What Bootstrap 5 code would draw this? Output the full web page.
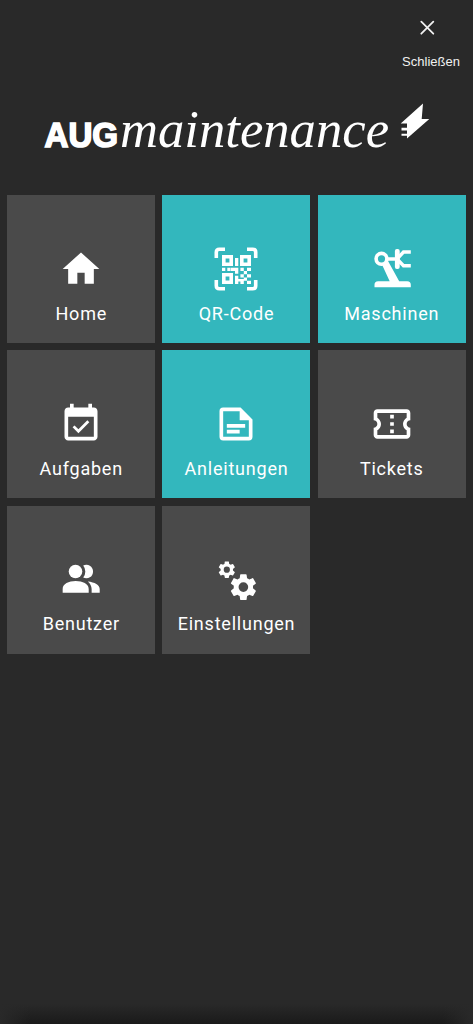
<!DOCTYPE html>
<html lang="de">
<head>
<meta charset="utf-8">
<meta name="viewport" content="width=device-width, initial-scale=1">
<title>AUGmaintenance</title>
<link href="https://cdn.jsdelivr.net/npm/bootstrap@5.3.0/dist/css/bootstrap.min.css" rel="stylesheet">
<style>
body{background:#292929;color:#fff;font-family:Roboto,"Liberation Sans",sans-serif}
.page{height:1024px}
.page-shade{height:20px;margin-top:auto;background:linear-gradient(90deg,#292929,#29292900 30px calc(100% - 30px),#292929),linear-gradient(#292929,#1a1a1a)}
.closer{width:84px;height:84px;padding-top:15px;color:#f1f1f1;font:13px/18px "Liberation Sans",sans-serif}
.closer svg{width:24px;height:24px;margin-right:8px}
.closer span{margin-top:14px}
.brand{height:111px}
.tiles{display:grid;grid-template-columns:repeat(3,148px);grid-auto-rows:148px;gap:7.25px;padding-left:7px}
.tile{background:#4a4a4a;color:#fff;padding-top:52px;font-size:18px;line-height:24px;letter-spacing:.78px}
.tile.on{background:#33b7bd}
.tile svg{width:44px;height:44px;fill:currentColor}
.tile span{margin-top:10.6px;padding-left:.5px;white-space:nowrap}
</style>
</head>
<body>
<main class="page d-flex flex-column overflow-hidden">
<a href="#" class="closer ms-auto d-flex flex-column align-items-center text-decoration-none">
<svg viewBox="0 0 24 24" stroke="currentColor" stroke-width="1.8" stroke-linecap="round"><path d="M6.3 6.7l12 12M18.3 6.7l-12 12"/></svg>
<span>Schließen</span></a>
<svg class="brand w-100 flex-shrink-0" viewBox="0 84 473 111" fill="#fff">
<text x="44.5" y="147" font-family="Liberation Sans,sans-serif" font-weight="700" font-size="34.5" textLength="73.5" lengthAdjust="spacingAndGlyphs" stroke="#fff" stroke-width="1.7">AUG</text>
<text x="120" y="147" font-family="Liberation Serif,serif" font-style="italic" font-size="53" textLength="269" lengthAdjust="spacingAndGlyphs">maintenance</text>
<path d="M423 103.5L421.700 119H429.300L407 138.500V135.700H401.500V133.700H407V130.500H401.500V127.700H407V123.500H400.700Z"/>
</svg>
<nav class="tiles">
<a href="#" class="tile d-flex flex-column align-items-center text-decoration-none"><svg viewBox="0 0 24 24"><path d="M10 20v-6h4v6h5v-8h3L12 3 2 12h3v8z"/></svg><span>Home</span></a>
<a href="#" class="tile on d-flex flex-column align-items-center text-decoration-none"><svg viewBox="0 0 44 44"><path fill="none" stroke="currentColor" stroke-width="3.6" d="M2.3 11V5.3q0-3 3-3H11M33 2.3h5.7q3 0 3 3V11M2.3 33v5.7q0 3 3 3H11M33 41.7h5.7q3 0 3-3V33"/><path fill-rule="evenodd" d="M8 8h11v11H8zm3.6 3.6v3.8h3.8v-3.8zM26 8h11v11H26zm3.6 3.6v3.8h3.8v-3.8zM8 26h11v11H8zm3.6 3.6v3.8h3.8v-3.8zM21 11h3.3v8H21zM8 20.7h3.3V24H8zM13.3 20.7h3.3V24h-3.3zM17 20.7h7.3v6H21V24h-4zM26.4 20.7h3.4V24h-3.4zM33 20.7h4V24h-4zM29.8 24H33v3.3h-3.2zM33 27.3h4v3.2h-4zM26.4 27.3h3.4v3.2h-3.4zM21 28.8h3.3v3.2h5.5v-1.5H33v3.3h-3.2V37h-3.4v-2.5h-2.1V37H21zM33 33.8h4V37h-4z"/></svg><span>QR-Code</span></a>
<a href="#" class="tile on d-flex flex-column align-items-center text-decoration-none"><svg viewBox="0 0 44 44"><path d="M4.500 40.200v-2.400q0-3.600 3.600-3.600h11.600L12.300 18.200l6-3.600L29.200 34.200h8q3.600 0 3.600 3.600v2.400z"/><circle cx="11.500" cy="11.800" r="5.400" fill="none" stroke="currentColor" stroke-width="3.600"/><path fill="none" stroke="currentColor" stroke-width="3.400" d="M17.500 12h8M40.800 5H33.500l-6.500 7 6.500 6.700h7.300"/><rect x="24.900" y="2" width="4.800" height="20" rx="2"/></svg><span>Maschinen</span></a>
<a href="#" class="tile d-flex flex-column align-items-center text-decoration-none"><svg viewBox="0 0 24 24"><path d="M16.530 11.060L15.470 10l-4.880 4.880-2.120-2.120-1.060 1.060L10.590 17zM19 3h-1V1h-2v2H8V1H6v2H5c-1.110 0-1.990.9-1.990 2L3 19c0 1.100.89 2 2 2h14c1.100 0 2-.9 2-2V5c0-1.100-.9-2-2-2zm0 16H5V8h14z"/></svg><span>Aufgaben</span></a>
<a href="#" class="tile on d-flex flex-column align-items-center text-decoration-none"><svg viewBox="0 0 24 24"><path fill-rule="evenodd" d="M5 3h9.500L21 9.500V19a2 2 0 0 1-2 2H5a2 2 0 0 1-2-2V5a2 2 0 0 1 2-2zm0 2v14h14v-9h-5V5zM7 12h10v2H7zm0 3.200h7v2H7z"/></svg><span>Anleitungen</span></a>
<a href="#" class="tile d-flex flex-column align-items-center text-decoration-none"><svg viewBox="0 0 24 24"><path d="M22 10V6c0-1.110-.9-2-2-2H4c-1.100 0-1.990.89-1.990 2v4c1.100 0 1.990.9 1.990 2s-.89 2-2 2v4c0 1.100.9 2 2 2h16c1.100 0 2-.9 2-2v-4c-1.100 0-2-.9-2-2s.9-2 2-2zm-2-1.460c-1.190.69-2 1.990-2 3.460s.81 2.770 2 3.460V18H4v-2.540c1.190-.69 2-1.990 2-3.460 0-1.480-.8-2.770-1.990-3.460L4 6h16zM11 15h2v2h-2zm0-4h2v2h-2zm0-4h2v2h-2z"/></svg><span>Tickets</span></a>
<a href="#" class="tile d-flex flex-column align-items-center text-decoration-none"><svg viewBox="0 .6 24 24"><circle cx="9" cy="8" r="3.700"/><path d="M2 19.500V17.500c0-2.700 3.300-4.300 7.100-4.300s7.100 1.600 7.100 4.300v2zM13.200 11.300a5.300 5.300 0 0 0 0-6.600 3.700 3.700 0 1 1 0 6.600zM15.700 13.400c3.800.4 6.500 1.800 6.500 4.100v2h-4.400v-2c0-1.600-.8-3-2.100-4.100z"/></svg><span>Benutzer</span></a>
<a href="#" class="tile d-flex flex-column align-items-center text-decoration-none"><svg viewBox="0 0 44 44"><defs><path id="cog" d="M19.140 12.940c.04-.3.060-.61.060-.94 0-.32-.02-.64-.07-.94l2.030-1.580c.18-.14.230-.41.120-.61l-1.920-3.320c-.12-.22-.37-.29-.59-.22l-2.390.96c-.5-.38-1.030-.7-1.620-.94L14.400 2.810c-.04-.24-.24-.41-.48-.41h-3.840c-.24 0-.43.17-.47.41L9.250 5.350c-.59.24-1.130.57-1.620.94l-2.390-.96c-.22-.08-.47 0-.59.22L2.740 8.870c-.12.210-.08.470.12.610l2.030 1.580c-.05.300-.09.630-.09.940s.02.640.07.940l-2.030 1.580c-.18.140-.23.410-.12.610l1.920 3.320c.12.220.37.290.59.220l2.390-.96c.5.380 1.030.7 1.620.94l.36 2.540c.05.240.24.410.48.410h3.840c.24 0 .44-.17.470-.41l.36-2.540c.59-.24 1.130-.56 1.620-.94l2.390.96c.22.080.47 0 .59-.22l1.920-3.320c.12-.22.070-.47-.12-.61zM12 15.600A3.600 3.600 0 1 1 12 8.400a3.600 3.600 0 0 1 0 7.200z"/></defs><use href="#cog" transform="translate(2.500 1.400)scale(.86)"/><use href="#cog" transform="translate(13.300 13)scale(1.340)"/></svg><span>Einstellungen</span></a>
</nav>
<div class="page-shade"></div>
</main>
<script src="https://cdn.jsdelivr.net/npm/bootstrap@5.3.0/dist/js/bootstrap.bundle.min.js"></script>
</body>
</html>
